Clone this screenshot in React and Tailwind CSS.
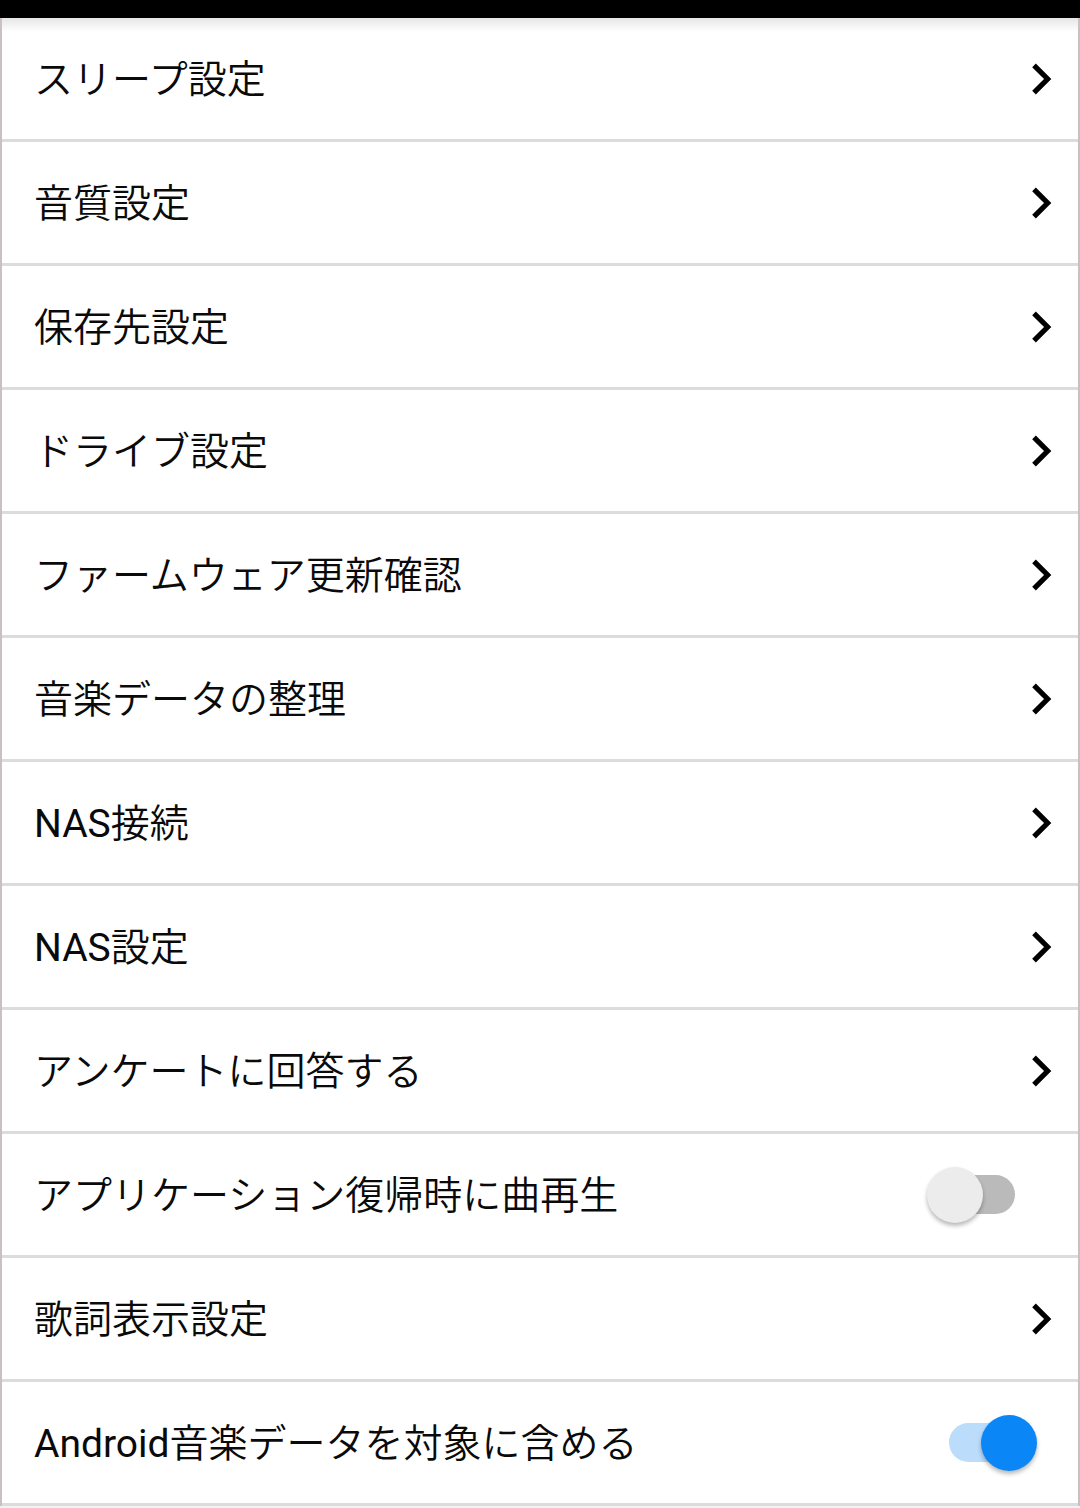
import React from "react";

const items = [
  { label: "スリープ設定", type: "nav" },
  { label: "音質設定", type: "nav" },
  { label: "保存先設定", type: "nav" },
  { label: "ドライブ設定", type: "nav" },
  { label: "ファームウェア更新確認", type: "nav" },
  { label: "音楽データの整理", type: "nav" },
  { label: "NAS接続", type: "nav" },
  { label: "NAS設定", type: "nav" },
  { label: "アンケートに回答する", type: "nav" },
  { label: "アプリケーション復帰時に曲再生", type: "toggle", on: false },
  { label: "歌詞表示設定", type: "nav" },
  { label: "Android音楽データを対象に含める", type: "toggle", on: true },
];

function Chevron() {
  return (
    <svg viewBox="0 0 24 24" className="w-[62px] h-[62px] mr-[6px] shrink-0" fill="#000">
      <path d="M10 6L8.59 7.41 13.17 12l-4.58 4.59L10 18l6-6z" />
    </svg>
  );
}

function Toggle({ on }) {
  return (
    <div
      className={`relative w-[66px] h-[39px] rounded-full mr-[63px] shrink-0 ${
        on ? "bg-[#bcdcfb]" : "bg-[#bababa]"
      }`}
    >
      <div
        className={`absolute top-1/2 -translate-y-1/2 w-[56px] h-[56px] rounded-full shadow-[0_3px_4px_rgba(0,0,0,0.28)] ${
          on ? "left-[32px] bg-[#0a86f7]" : "left-[-22px] bg-[#ececec]"
        }`}
      />
    </div>
  );
}

function Label({ text }) {
  const parts = text.match(/[A-Za-z0-9]+|[^A-Za-z0-9]+/g) || [];
  return (
    <span
      className="text-[39px] leading-none text-[#0a0a0a] pt-[3px]"
      style={{ fontFamily: 'Roboto, "Noto Sans CJK JP", sans-serif' }}
    >
      {parts.map((p, i) =>
        /^[A-Za-z0-9]+$/.test(p) ? (
          <span key={i} className="font-normal">{p}</span>
        ) : (
          <span key={i} className="font-[350]">{p}</span>
        )
      )}
    </span>
  );
}

export default function App() {
  return (
    <div className="w-[1080px] h-[1508px] bg-[#f2f2f2] overflow-hidden">
      <div className="h-[18px] bg-black" />
      <div className="border-x-2 border-[#c9c1c1]">
        {items.map((it, i) => (
          <div
            key={i}
            className={`h-[124px] flex items-center justify-between border-b-[3px] border-[#dcdcdc] pl-[32px] ${
              i === 0
                ? "bg-[linear-gradient(to_bottom,#e6e6e6_0px,#ffffff_14px)]"
                : "bg-white"
            }`}
          >
            <Label text={it.label} />
            {it.type === "nav" ? <Chevron /> : <Toggle on={it.on} />}
          </div>
        ))}
      </div>
    </div>
  );
}
